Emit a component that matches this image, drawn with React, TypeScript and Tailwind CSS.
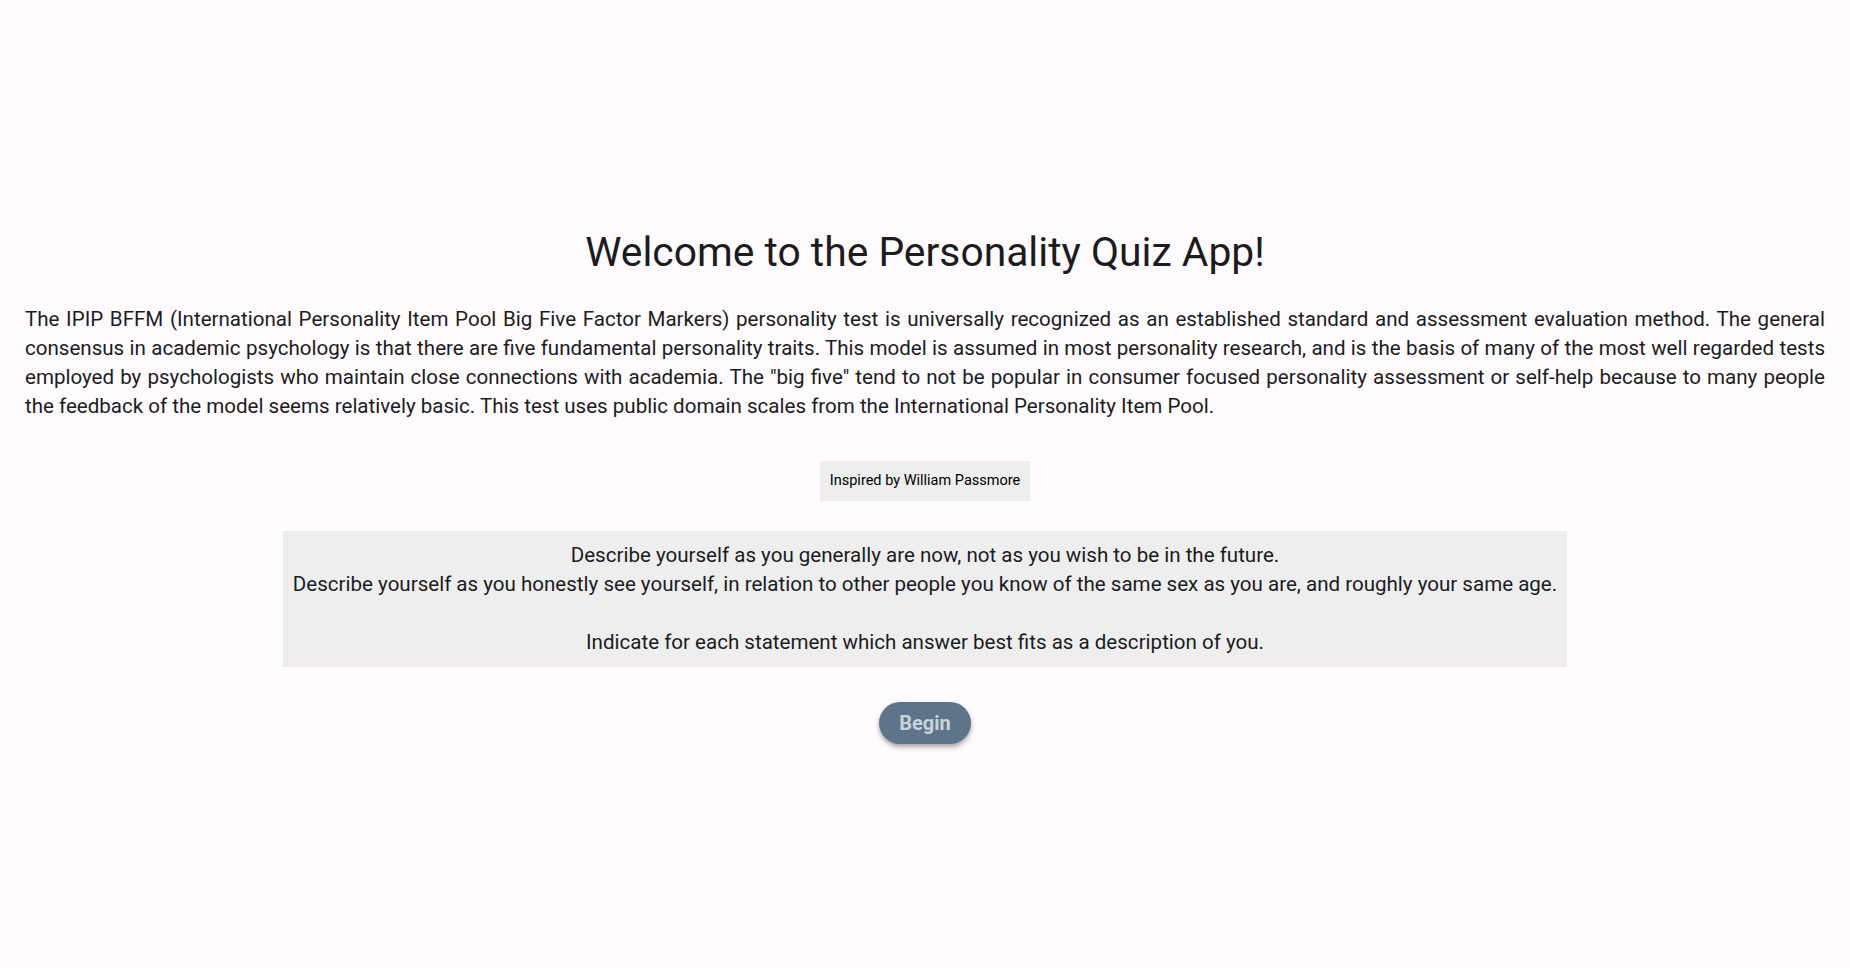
export default function App() {
  return (
    <div className="min-h-screen bg-[#fffbfe] flex flex-col items-center justify-center px-[25px] text-[#1c1b1f] font-['Roboto',sans-serif]">
      {/* Title */}
      <h1 className="text-[40.8px] leading-[56px] font-normal text-center">
        Welcome to the Personality Quiz App!
      </h1>

      {/* Intro */}
      <p className="mt-[25px] text-[20.55px] leading-[29px] text-justify w-full">
        The IPIP BFFM (International Personality Item Pool Big Five Factor Markers) personality test is universally
        recognized as an established standard and assessment evaluation method. The general consensus in academic
        psychology is that there are five fundamental personality traits. This model is assumed in most personality
        research, and is the basis of many of the most well regarded tests employed by psychologists who maintain close
        connections with academia. The "big five" tend to not be popular in consumer focused personality assessment or
        self-help because to many people the feedback of the model seems relatively basic. This test uses public domain
        scales from the International Personality Item Pool.
      </p>

      <div className="mt-[40px] h-[40px] px-[10px] flex items-center bg-[#eeeeee] text-[14.5px] text-black">
        Inspired by William Passmore
      </div>

      {/* Instructions */}
      <div className="mt-[30px] bg-[#eeeeee] px-[10px] py-[10px] text-[20.55px] leading-[29px] text-center">
        <div>Describe yourself as you generally are now, not as you wish to be in the future.</div>
        <div>
          Describe yourself as you honestly see yourself, in relation to other people you know of the same sex as you
          are, and roughly your same age.
        </div>
        <div>&nbsp;</div>
        <div>Indicate for each statement which answer best fits as a description of you.</div>
      </div>

      <button className="mt-[35px] h-[42px] px-[20px] rounded-full bg-[#5e7489] text-[#c9d3dd] text-[20px] font-bold shadow-[0_3px_5px_rgba(0,0,0,0.35)]">
        Begin
      </button>
    </div>
  )
}
